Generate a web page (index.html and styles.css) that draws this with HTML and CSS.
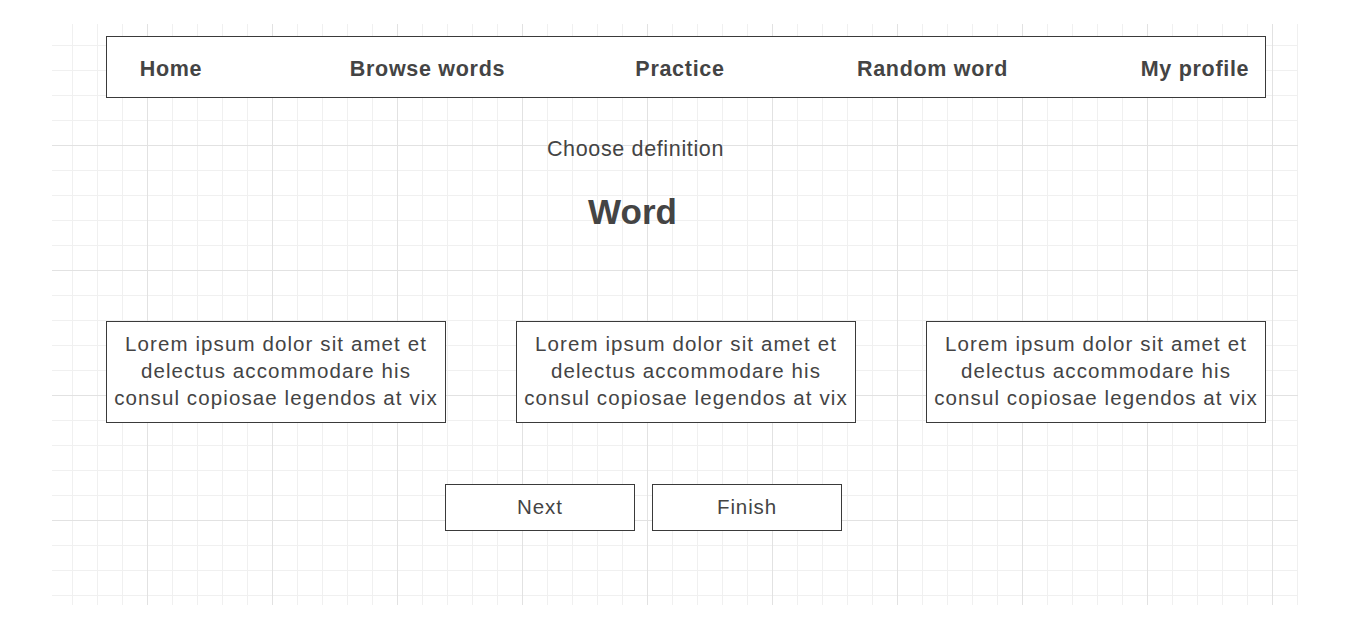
FILE: index.html
```html
<!DOCTYPE html>
<html lang="en">
<head>
<meta charset="utf-8">
<title>Choose definition</title>
<link rel="stylesheet" href="styles.css">
</head>
<body>
<div class="canvas">
  <nav class="nav">
    <span class="nav-item">Home</span>
    <span class="nav-item">Browse words</span>
    <span class="nav-item">Practice</span>
    <span class="nav-item">Random word</span>
    <span class="nav-item">My profile</span>
  </nav>
  <div class="prompt">Choose definition</div>
  <h1 class="word">Word</h1>
  <div class="cards">
    <div class="card">Lorem ipsum dolor sit amet et delectus accommodare his consul copiosae legendos at vix</div>
    <div class="card">Lorem ipsum dolor sit amet et delectus accommodare his consul copiosae legendos at vix</div>
    <div class="card">Lorem ipsum dolor sit amet et delectus accommodare his consul copiosae legendos at vix</div>
  </div>
  <div class="actions">
    <button class="btn">Next</button>
    <button class="btn">Finish</button>
  </div>
</div>
</body>
</html>
```

FILE: styles.css
```css
html, body {
  margin: 0;
  padding: 0;
  background: #ffffff;
}

body {
  font-family: "Liberation Sans", Arial, sans-serif;
  color: #444444;
}

.canvas {
  box-sizing: border-box;
  margin: 24px 0 0 52px;
  width: 1246px;
  height: 581px;
  padding: 12px 0 0 54px;
  background-color: #ffffff;
  background-image:
    linear-gradient(to right, #e2e2e2 1px, transparent 1px),
    linear-gradient(to bottom, #e2e2e2 1px, transparent 1px),
    linear-gradient(to right, #f0f0f0 1px, transparent 1px),
    linear-gradient(to bottom, #f0f0f0 1px, transparent 1px);
  background-size:
    125px 100%,
    100% 125px,
    25px 100%,
    100% 25px;
  background-position:
    95px 0,
    0 121px,
    20px 0,
    0 21px;
}

.nav {
  box-sizing: border-box;
  width: 1160px;
  height: 62px;
  padding-top: 4px;
  border: 1px solid #3a3a3a;
  background: #ffffff;
  display: grid;
  grid-template-columns: 128px 385px 120px 385px 1fr;
  align-items: center;
}

.nav-item {
  text-align: center;
  font-weight: bold;
  font-size: 21.5px;
  letter-spacing: 0.7px;
  color: #444444;
  white-space: nowrap;
}

.prompt {
  width: 1059px;
  margin-top: 39px;
  text-align: center;
  font-size: 21.5px;
  letter-spacing: 0.65px;
  line-height: 24px;
}

.word {
  width: 1053px;
  margin: 31px 0 0;
  text-align: center;
  font-size: 35px;
  line-height: 40px;
  font-weight: bold;
}

.cards {
  width: 1160px;
  margin-top: 89px;
  display: flex;
  gap: 70px;
}

.card {
  box-sizing: border-box;
  width: 340px;
  height: 102px;
  border: 1px solid #3a3a3a;
  background: #ffffff;
  display: flex;
  align-items: center;
  justify-content: center;
  text-align: center;
  font-size: 20.5px;
  letter-spacing: 1.1px;
  line-height: 27px;
  padding: 0 2px 4px;
}

.actions {
  margin: 61px 0 0 339px;
  display: flex;
  gap: 17px;
}

.btn {
  box-sizing: border-box;
  width: 190px;
  height: 47px;
  border: 1px solid #3a3a3a;
  border-radius: 0;
  background: #ffffff;
  font-family: "Liberation Sans", Arial, sans-serif;
  font-size: 20.5px;
  letter-spacing: 0.9px;
  color: #444444;
  padding: 0 0 2px;
}
```
